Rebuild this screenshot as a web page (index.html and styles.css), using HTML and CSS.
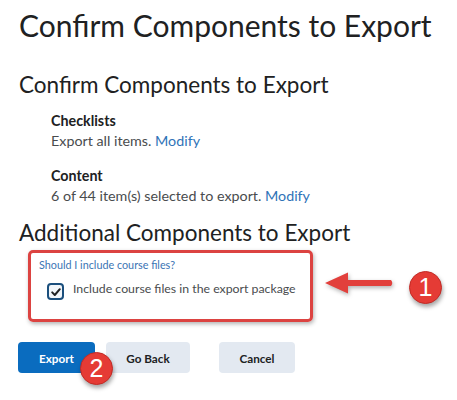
FILE: index.html
```html
<!DOCTYPE html>
<html>
<head>
<meta charset="utf-8">
<link rel="stylesheet" href="styles.css">
</head>
<body>
<main class="page">
  <h1 class="title">Confirm Components to Export</h1>
  <h2 class="section-title">Confirm Components to Export</h2>
  <div class="components">
    <div class="component">
      <div class="comp-name">Checklists</div>
      <div class="comp-desc">Export all items. <a class="link">Modify</a></div>
    </div>
    <div class="component">
      <div class="comp-name">Content</div>
      <div class="comp-desc">6 of 44 item(s) selected to export. <a class="link">Modify</a></div>
    </div>
  </div>
  <h2 class="section-title additional">Additional Components to Export</h2>
  <div class="highlight">
    <a class="help-link">Should I include course files?</a>
    <label class="check-row">
      <span class="checkbox"><svg viewBox="0 0 12 12" width="12" height="12"><path d="M2.2 6.4 L4.8 9 L9.8 3.2" fill="none" stroke="#202122" stroke-width="2" stroke-linecap="round" stroke-linejoin="round"/></svg></span>
      <span class="check-label">Include course files in the export package</span>
    </label>
  </div>
  <div class="buttons">
    <button class="btn btn-primary">Export</button>
    <button class="btn btn-secondary btn-back">Go Back</button>
    <button class="btn btn-secondary btn-cancel">Cancel</button>
  </div>

  <svg class="arrow" viewBox="0 0 72 26" width="72" height="26">
    <path d="M2 12 L25 1.5 L25 9 L68 9 Q70.5 12 68 15 L25 15 L25 22.5 Z" fill="#e2403c"/>
  </svg>
  <div class="badge badge-one">1</div>
  <div class="badge badge-two">2</div>
</main>
</body>
</html>
```

FILE: styles.css
```css
html, body {
  margin: 0;
  padding: 0;
  background: #ffffff;
}
.page {
  position: relative;
  width: 457px;
  height: 400px;
  padding: 0 0 0 19px;
  box-sizing: border-box;
  font-family: Lato, "Noto Sans", sans-serif;
  color: #494c4e;
  overflow: hidden;
}
.title {
  margin: 7px 0 0 0;
  font-size: 30px;
  line-height: 36px;
  font-weight: 400;
  color: #202122;
}
.section-title {
  margin: 28px 0 0 0;
  font-size: 22.5px;
  line-height: 27px;
  font-weight: 400;
  color: #202122;
}
.components {
  padding-left: 32px;
  margin-top: 13px;
}
.component + .component {
  margin-top: 15px;
}
.comp-name {
  font-size: 14.3px;
  line-height: 20px;
  font-weight: 700;
  color: #202122;
}
.comp-desc {
  font-size: 14.3px;
  line-height: 20px;
}
.link {
  color: #2f73b8;
}
.section-title.additional {
  margin-top: 13px;
}
.highlight {
  margin: 4px 0 0 9px;
  width: 285px;
  height: 72px;
  box-sizing: border-box;
  border: 3px solid #dc4341;
  border-radius: 5px;
  box-shadow: 1px 2px 4px rgba(0, 0, 0, 0.3);
  padding: 4px 8px 0 8px;
}
.help-link {
  display: block;
  font-size: 10.8px;
  line-height: 16px;
  color: #3a74b4;
}
.check-row {
  display: flex;
  align-items: flex-start;
  margin: 6px 0 0 8px;
}
.checkbox {
  display: flex;
  align-items: center;
  justify-content: center;
  flex: none;
  width: 17px;
  height: 17px;
  box-sizing: border-box;
  margin-top: 4px;
  border: 2px solid #1b4f7d;
  border-radius: 4px;
  background: #f2f6fa;
}
.check-label {
  margin-left: 9px;
  font-size: 12.3px;
  line-height: 20px;
  white-space: nowrap;
}
.buttons {
  display: flex;
  margin-top: 20px;
  margin-left: -1px;
}
.btn {
  height: 31px;
  border: none;
  border-radius: 4px;
  font-family: Lato, "Noto Sans", sans-serif;
  font-size: 11.7px;
  font-weight: 700;
  padding: 0;
}
.btn-primary {
  width: 77px;
  background: #0a6cbf;
  color: #ffffff;
}
.btn-secondary {
  background: #e3e9f1;
  color: #202122;
}
.btn-back {
  width: 84px;
  margin-left: 11px;
}
.btn-cancel {
  width: 76px;
  margin-left: 29px;
}
.arrow {
  position: absolute;
  left: 323px;
  top: 271px;
  filter: drop-shadow(1px 2px 2px rgba(0, 0, 0, 0.3));
}
.badge {
  position: absolute;
  width: 33px;
  height: 33px;
  box-sizing: border-box;
  border-radius: 50%;
  background: #e53b35;
  border: 1px solid #c22a25;
  box-shadow: 1px 3px 4px rgba(0, 0, 0, 0.35);
  color: #ffffff;
  font-family: "Liberation Sans", Arial, sans-serif;
  font-size: 25px;
  line-height: 31px;
  text-align: center;
}
.badge-one {
  left: 409px;
  top: 271px;
}
.badge-two {
  left: 80px;
  top: 352px;
}
```
